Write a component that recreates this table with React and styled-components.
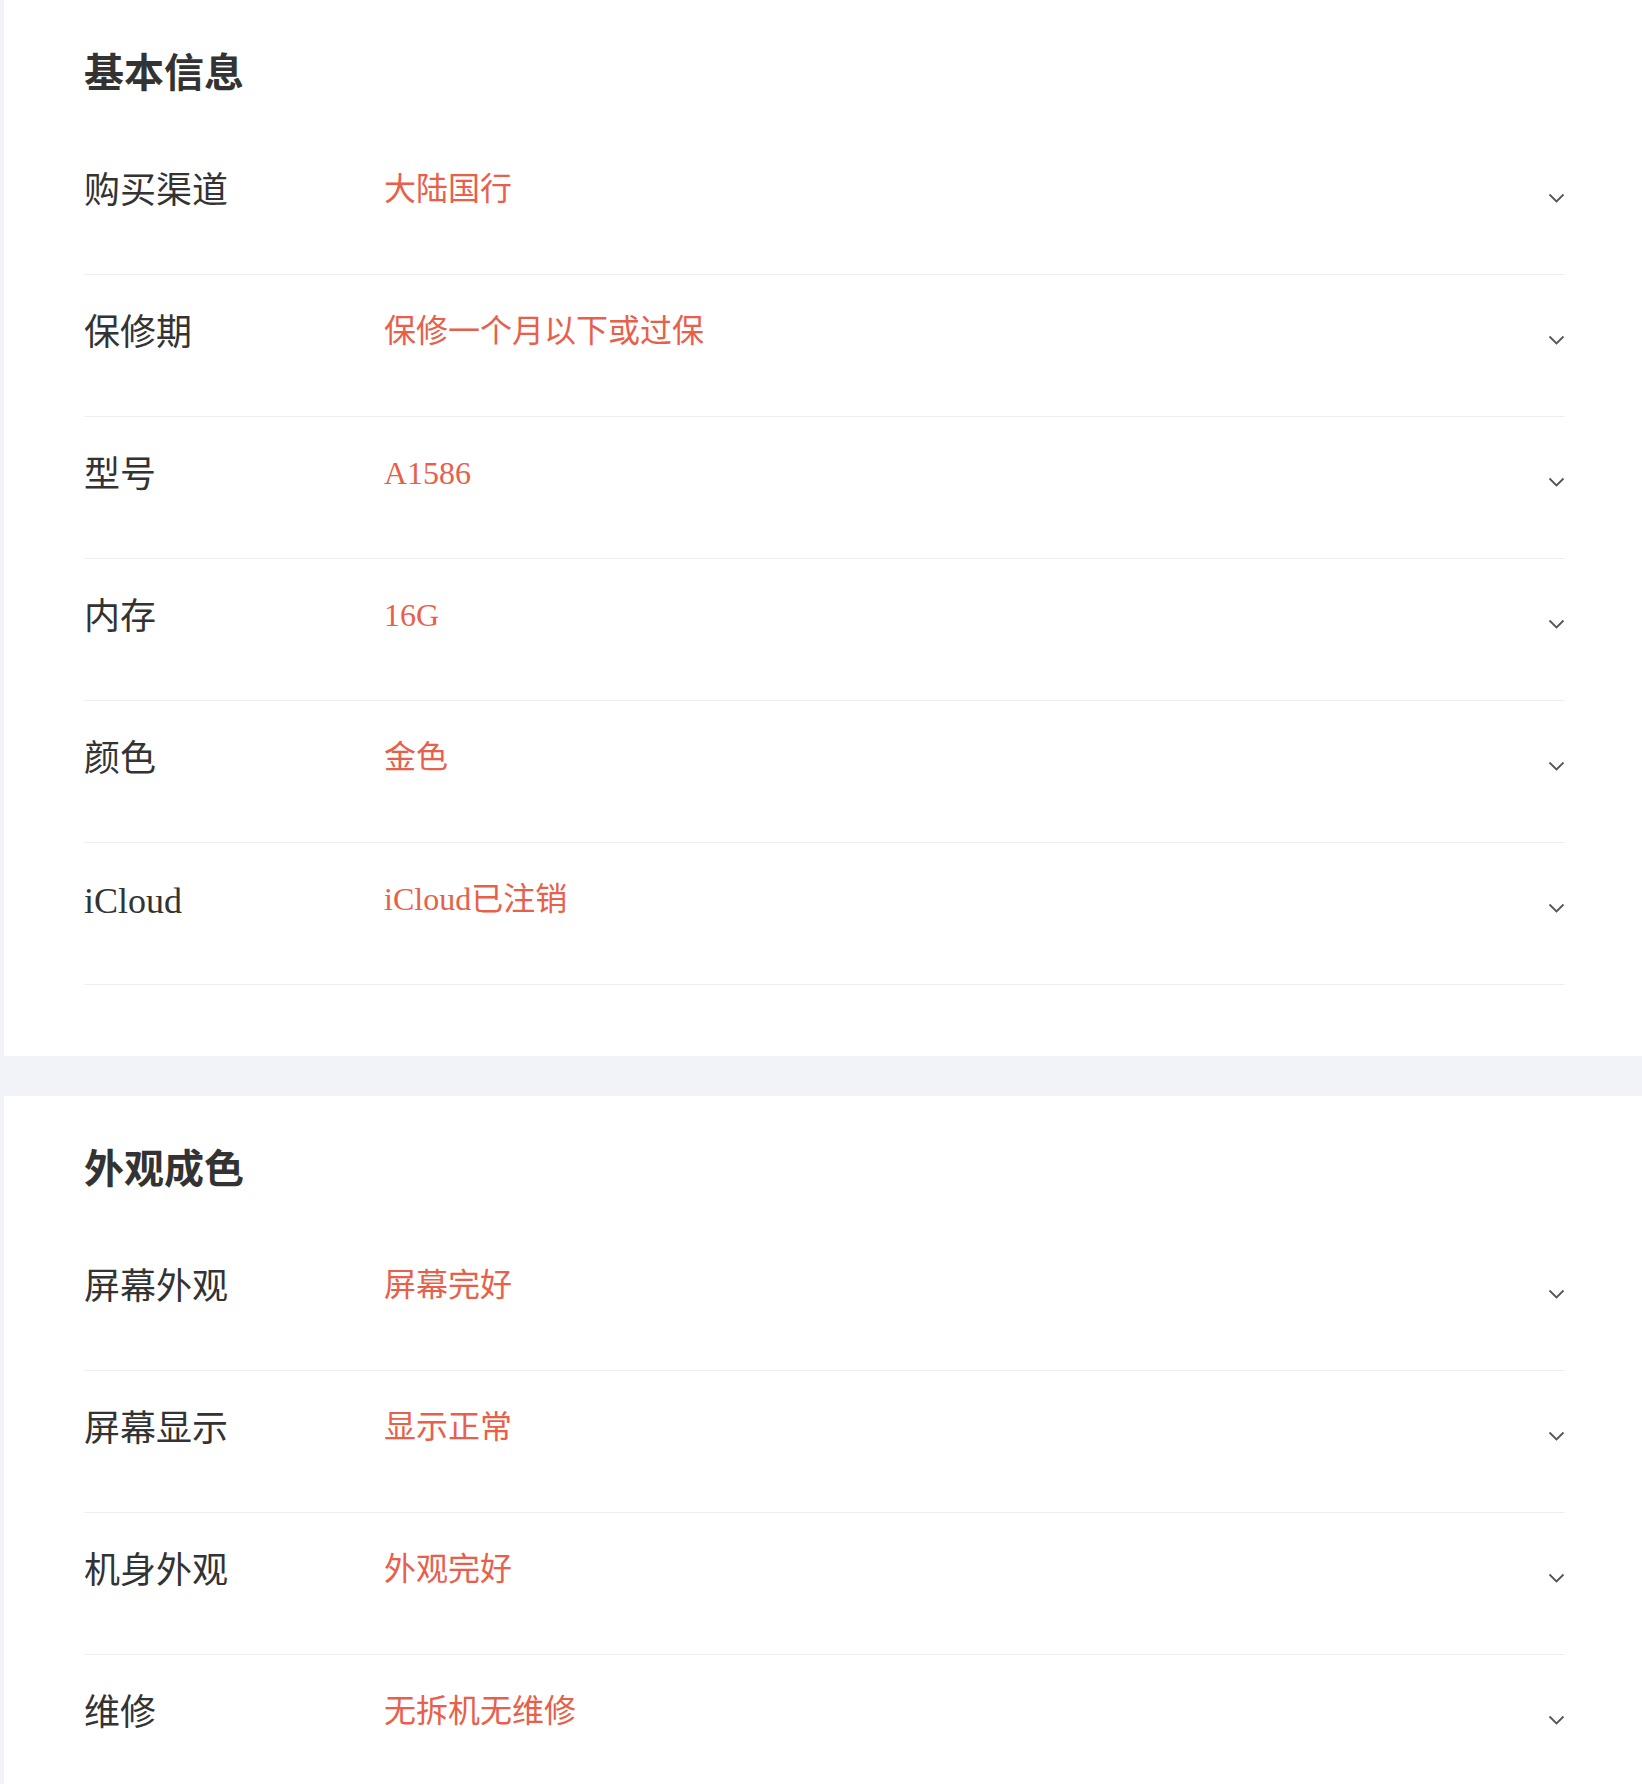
import React from 'react';
import styled, { createGlobalStyle } from 'styled-components';

const GlobalStyle = createGlobalStyle`
  html, body {
    margin: 0;
    padding: 0;
    overflow: hidden;
    background: #f2f3f8;
  }
  body {
    font-family: "Liberation Serif", "Noto Sans CJK SC", serif;
  }
`;

const Page = styled.div`
  display: flex;
  flex-direction: column;
  gap: 40px;
  padding-left: 4px;
`;

const Section = styled.section`
  background: #fff;
  padding: 0 77px 71px 80px;
`;

const SectionTitle = styled.h2`
  margin: 0;
  padding: 54px 0 39px;
  font-size: 40px;
  line-height: 40px;
  font-weight: 700;
  color: #333;
`;

const Row = styled.div`
  display: flex;
  align-items: flex-start;
  box-sizing: border-box;
  height: 142px;
  padding-top: 38px;
  border-bottom: 1px solid #efefef;
`;

const Label = styled.div`
  width: 300px;
  flex-shrink: 0;
  font-size: 36px;
  line-height: 40px;
  color: #333;
`;

const Value = styled.div`
  flex: 1;
  font-size: 32px;
  line-height: 36px;
  color: #e8604a;
`;

const Chevron = styled.svg`
  width: 17px;
  height: 10px;
  margin-top: 22px;
  flex-shrink: 0;
`;

const sections = [
  {
    title: '基本信息',
    rows: [
      ['购买渠道', '大陆国行'],
      ['保修期', '保修一个月以下或过保'],
      ['型号', 'A1586'],
      ['内存', '16G'],
      ['颜色', '金色'],
      ['iCloud', 'iCloud已注销'],
    ],
  },
  {
    title: '外观成色',
    rows: [
      ['屏幕外观', '屏幕完好'],
      ['屏幕显示', '显示正常'],
      ['机身外观', '外观完好'],
      ['维修', '无拆机无维修'],
    ],
  },
];

function ArrowDown() {
  return (
    <Chevron viewBox="0 0 17 10">
      <polyline points="1.5,1.5 8.5,8.5 15.5,1.5" fill="none" stroke="#555" strokeWidth="1.8" />
    </Chevron>
  );
}

export default function App() {
  return (
    <>
      <GlobalStyle />
      <Page>
        {sections.map((section) => (
          <Section key={section.title}>
            <SectionTitle>{section.title}</SectionTitle>
            {section.rows.map(([label, value]) => (
              <Row key={label}>
                <Label>{label}</Label>
                <Value>{value}</Value>
                <ArrowDown />
              </Row>
            ))}
          </Section>
        ))}
      </Page>
    </>
  );
}
